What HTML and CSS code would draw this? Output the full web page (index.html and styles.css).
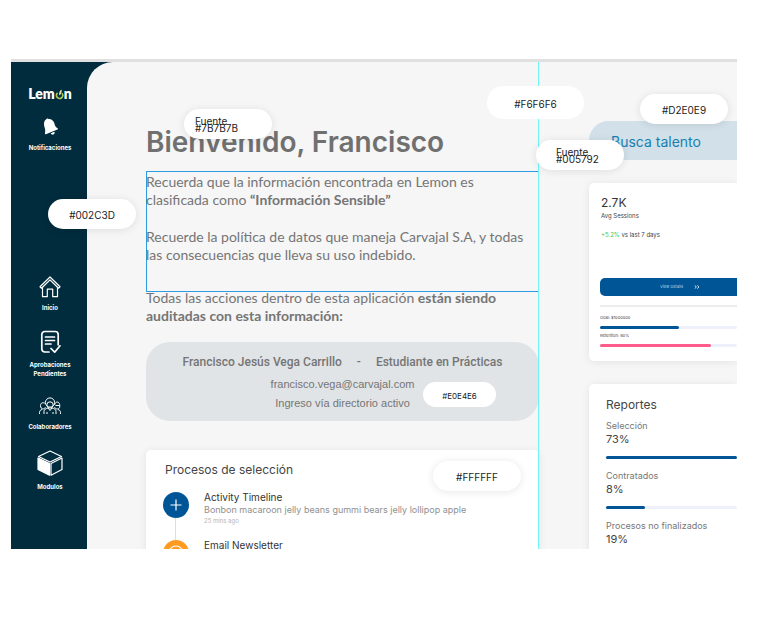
FILE: index.html
```html
<!DOCTYPE html>
<html lang="es">
<head>
<meta charset="utf-8">
<meta name="viewport" content="width=device-width, initial-scale=1">
<title>Lemon</title>
<link rel="stylesheet" href="styles.css">
</head>
<body>
<div class="frame">
  <nav class="sidebar" aria-label="Principal">
    <a class="logo" href="#" aria-label="Lemon">Lem<svg class="logo-o" viewBox="0 0 9 13"><path d="M2.600 4.800A3.200 3.200 0 1 0 7 5.200" fill="none" stroke="#a9c85a" stroke-width="1.700"/><path d="M4.300 7.500C3.700 5 4.600 2.600 6.600 1.500 7 4 6.200 6.300 4.300 7.500z" fill="#dfe9a0"/></svg>n</a>
    <a class="nav-item nav-bell" href="#">
      <svg width="18" height="18" viewBox="-2 0 18 18" fill="#fff"><path d="M3.200 1.200C3.600.3 4.900.1 5.400.9 8.600.700 11 2.800 11.600 5.900c.4 2.100 1.300 3.300 3 4.300.5.4.4 1-.1 1.200L2.900 16.200c-.6.2-1.100-.2-1-.8.5-2 .4-3.700-.2-5.700C.6 6 .7 3 3.200 1.200z"/><path d="M7.800 15.300l3.700-1.500c.4 1.200 0 2.300-1.100 2.800-1.100.4-2.100 0-2.600-1.300z"/></svg>
      <span>Notificaciones</span>
    </a>
    <a class="nav-item" href="#">
      <svg width="22" height="22" viewBox="0 0 22 22" fill="none" stroke="#fff" stroke-width="1.200" stroke-linejoin="round"><path d="M1 10.800L11 1l10 9.800-1.500 1.400L11 3.900l-8.500 8.300z"/><path d="M3.500 11.500v9.200h4.800v-7.500h5.400v7.500h4.800v-9.200"/></svg>
      <span>Inicio</span>
    </a>
    <a class="nav-item nav-approve" href="#">
      <svg width="22" height="24" viewBox="0 0 22 24" fill="none" stroke="#fff" stroke-width="1.700" stroke-linecap="round" stroke-linejoin="round"><path d="M10 22H5.800a3 3 0 0 1-3-3V4.500a3 3 0 0 1 3-3h10.400a3 3 0 0 1 3 3v10.300"/><path d="M6.500 7h9M6.500 10.500h9M6.500 14H12"/><path d="M12 18.500l3.700 3.700 5.300-6.400"/></svg>
      <span>Aprobaciones Pendientes</span>
    </a>
    <a class="nav-item nav-people" href="#">
      <svg width="24" height="18" viewBox="0 0 24 18" fill="none" stroke="#fff" stroke-width="1"><circle cx="12" cy="5.500" r="4.600"/><circle cx="12" cy="8" r="3.200"/><path d="M6 17v-2.500c0-2 1.600-3 4-3.500l2 2.500 2-2.500c2.400.5 4 1.500 4 3.500V17M9 17v-2M15 17v-2"/><path d="M7.500 6.500C5 5 2.500 5.800 2.500 8.500c0 2.200 1.200 3.500 2.500 3.500 1 0 1.900-.7 2.500-1.800M1.500 17v-1.500c0-1.500.9-2.500 2.500-3M16.500 8C17 6 18 5 19.200 5c1.700 0 2.600 1.800 2.600 4s-1 3-2.500 3-2.300-.8-2.800-2M22.500 17v-1.500c0-1.500-.9-2.500-2.500-3M17.500 8.500h4"/></svg>
      <span>Colaboradores</span>
    </a>
    <a class="nav-item nav-modules" href="#">
      <svg width="26" height="26" viewBox="0 0 26 26" stroke="#fff" stroke-width="1.200" stroke-linejoin="round" fill="none"><path d="M13 1L24.500 6.500 13 12 1.500 6.500z"/><path d="M1 8l11.500 5.500v11.700L1 19.500z" fill="#fff"/><path d="M25 8l-11 5.500v11.700l11-5.700z"/></svg>
      <span>Modulos</span>
    </a>
    <div class="tag tag-dark">#002C3D</div>
  </nav>

  <main class="main">
    <section class="content">
      <h1>Bienvenido, Francisco</h1>
      <div class="notice">
        <p>Recuerda que la información encontrada en Lemon es clasificada como <strong>“Información Sensible”</strong></p>
        <p>Recuerde la política de datos que maneja Carvajal S.A, y todas las consecuencias que lleva su uso indebido.</p>
      </div>
      <p class="audit">Todas las acciones dentro de esta aplicación <strong>están siendo auditadas con esta información:</strong></p>
      <div class="identity">
        <div class="identity-name"><span>Francisco Jesús Vega Carrillo</span><span>-</span><span>Estudiante en Prácticas</span></div>
        <div>francisco.vega@carvajal.com</div>
        <div>Ingreso vía directorio activo</div>
        <div class="tag tag-small">#E0E4E6</div>
      </div>
      <section class="card processes">
        <h2>Procesos de selección</h2>
        <ol class="timeline">
          <li>
            <svg class="dot" viewBox="0 0 26 26"><circle cx="13" cy="13" r="13" fill="#005596"/><path d="M13 7.500v11M7.500 13h11" stroke="#fff" stroke-width="1.200"/></svg>
            <div><h3>Activity Timeline</h3><p>Bonbon macaroon jelly beans gummi bears jelly lollipop apple</p><time>25 mins ago</time></div>
          </li>
          <li>
            <svg class="dot" viewBox="0 0 26 26"><circle cx="13" cy="13" r="13" fill="#ff9b21"/><circle cx="13" cy="13" r="7" fill="none" stroke="#fff" stroke-width="1.200"/><path d="M13 9v4.500M13 15.500v1" stroke="#fff" stroke-width="1.200"/></svg>
            <div><h3>Email Newsletter</h3></div>
          </li>
        </ol>
        <div class="tag tag-white">#FFFFFF</div>
      </section>
      <div class="guide"></div>
      <div class="tag tag-font-gray"><span>Fuente</span><span>#7B7B7B</span></div>
      <div class="tag tag-page">#F6F6F6</div>
    </section>

    <aside class="side">
      <input class="search" type="search" placeholder="Busca talento" aria-label="Busca talento">
      <section class="card sessions">
        <h2>2.7K</h2>
        <p class="sessions-label">Avg Sessions</p>
        <p class="delta"><b>+5.2%</b> vs last 7 days</p>
        <button type="button"><span>View Details</span><svg width="6" height="4" viewBox="0 0 6 4" fill="none" stroke="#fff" stroke-width=".8"><path d="M.7.4L2.400 2 .7 3.600M3.300.4L5 2 3.300 3.600"/></svg></button>
        <hr>
        <p class="metric">Goal: $1000000</p>
        <div class="bar"><div class="fill" style="width:58%"></div></div>
        <p class="metric">Retention: 90%</p>
        <div class="bar"><div class="fill pink" style="width:81%"></div></div>
      </section>
      <section class="card reports">
        <h2>Reportes</h2>
        <div class="report"><p>Selección</p><strong>73%</strong><div class="bar"><div class="fill" style="width:100%"></div></div></div>
        <div class="report"><p>Contratados</p><strong>8%</strong><div class="bar"><div class="fill" style="width:30%"></div></div></div>
        <div class="report"><p>Procesos no finalizados</p><strong>19%</strong></div>
      </section>
      <div class="tag tag-search">#D2E0E9</div>
      <div class="tag tag-font-blue"><span>Fuente</span><span>#005792</span></div>
    </aside>
  </main>
</div>
</body>
</html>
```
FILE: styles.css
```css
* { box-sizing: border-box; }
body {
  margin: 0;
  height: 100vh;
  padding: 59px 25px 73px 11px;
  background: #fff;
  color: #757575;
  font-family: Inter, "Liberation Sans", sans-serif;
}
h1, h2, h3, p, ol { margin: 0; padding: 0; }
a { color: inherit; text-decoration: none; }
svg { display: block; }

.frame {
  height: 100%;
  display: flex;
  overflow: hidden;
  background: #002c3d;
  border-top: 3px solid #e0e0e0;
}

/* Sidebar */
.sidebar {
  position: relative;
  z-index: 2;
  flex: 0 0 76px;
  display: flex;
  flex-direction: column;
  align-items: center;
  padding: 24px 0 0 2px;
  color: #fff;
}
.logo {
  display: flex;
  align-items: center;
  height: 16px;
  font: 800 14px/16px Lato, sans-serif;
}
.logo-o { width: 9px; height: 13px; }
.nav-item {
  display: flex;
  flex-direction: column;
  align-items: center;
  gap: 5px;
  width: 52px;
  margin-bottom: 18px;
  text-align: center;
  font-size: 6px;
  line-height: 9px;
  font-weight: 700;
}
.nav-bell { margin: 16px 0 124px; gap: 7px; }
.nav-approve { margin-bottom: 19px; gap: 6px; }
.nav-people { margin-bottom: 19px; gap: 7px; }
.nav-modules { gap: 6px; }

/* Main area */
.main {
  flex: 1;
  min-width: 0;
  display: grid;
  grid-template-columns: minmax(0, 393fr) minmax(0, 148fr);
  gap: 50px;
  padding-left: 59px;
  background: #f6f6f6;
  border-top-left-radius: 26px;
}
.content, .side { position: relative; }
.content { padding-top: 62px; }
h1 { font-size: 28px; line-height: 36px; font-weight: 600; color: #707070; white-space: nowrap; }
.notice {
  height: 121px;
  margin-top: 11px;
  padding-top: 2px;
  box-shadow: inset 0 0 0 1px #2f9be0;
}
.notice p, .audit { font: 14px/18px Lato, sans-serif; }
.notice p + p { margin-top: 19px; }
.audit { margin-top: -3px; }
.identity {
  position: relative;
  margin-top: 17px;
  height: 79px;
  padding-top: 11px;
  border-radius: 24px;
  background: #e0e4e6;
  text-align: center;
  font: 11px/19px "Liberation Sans", sans-serif;
}
.identity-name {
  display: flex;
  justify-content: center;
  gap: 15px;
  margin-bottom: 3px;
  font: 500 12px/19px Roboto, sans-serif;
}
.card { background: #fff; box-shadow: 0 1px 8px rgba(0, 0, 0, .08); color: #444; }
.card h2, .card h3 { font-weight: 400; }
.processes {
  position: relative;
  height: 200px;
  margin-top: 29px;
  padding: 11px 17px 0;
  border-radius: 5px;
}
.processes h2 { padding-left: 2px; font-size: 12px; line-height: 18px; }
.timeline { list-style: none; margin-top: 13px; }
.timeline li { display: flex; gap: 15px; height: 48px; position: relative; }
.timeline li:first-child::before {
  content: "";
  position: absolute;
  left: 12px;
  top: 26px;
  bottom: 0;
  width: 1px;
  background: #ddd;
}
.dot { width: 26px; height: 26px; flex: none; }
.timeline h3 { font-size: 10px; line-height: 12px; margin-top: -1px; color: #333; }
.timeline p { font-size: 9px; line-height: 13px; color: #909090; white-space: nowrap; }
.timeline time { display: block; font-size: 6px; line-height: 10px; color: #b5b5b5; }
.guide { position: absolute; top: 0; bottom: 0; right: 0; width: 1px; background: #6ff5f8; }

/* Right column */
.side { padding-top: 59px; }
.search {
  display: block;
  width: 100%;
  height: 39px;
  padding: 2px 0 0 22px;
  border: 0;
  border-radius: 20px 0 0 20px;
  background: #d2e0e9;
  font: 14px/18px Inter, sans-serif;
}
.search::placeholder { color: #1480b2; opacity: 1; }
.sessions {
  margin-top: 23px;
  height: 178px;
  padding: 12px 0 0 11px;
  border-radius: 5px 0 0 5px;
}
.sessions h2 { font-size: 12px; line-height: 16px; color: #333; padding-left: 1px; }
.sessions-label { font-size: 6px; line-height: 10px; padding-left: 1px; }
.delta { margin-top: 9px; font-size: 6px; line-height: 10px; padding-left: 1px; }
.delta b { color: #35c958; font-weight: 400; }
.sessions button {
  display: flex;
  align-items: center;
  gap: 11px;
  width: 100%;
  height: 18px;
  margin-top: 38px;
  padding: 0 0 0 60px;
  border: 0;
  border-radius: 5px 0 0 5px;
  background: #005596;
  color: #b9d2e6;
  font: 4px/6px Inter, sans-serif;
}
.sessions hr { height: 2px; margin: 9px 0 8px; border: 0; background: #ececec; }
.metric { font-size: 4px; line-height: 6px; margin-bottom: 5px; }
.bar { height: 3px; border-radius: 2px; background: #eef1fb; }
.fill { height: 100%; border-radius: 2px; background: #005596; }
.fill.pink { background: #ff5b8c; }
.sessions .bar + .metric { margin-top: 4px; }
.reports {
  margin-top: 23px;
  height: 240px;
  padding: 13px 0 0 17px;
  border-radius: 5px 0 0 5px;
}
.reports h2 { font-size: 12px; line-height: 16px; }
.report { height: 50px; padding-top: 6px; white-space: nowrap; }
.report p { font-size: 9px; line-height: 13px; color: #777; }
.report strong { display: block; font-size: 11px; line-height: 15px; font-weight: 400; }
.report .bar { margin-top: 9px; }

/* Colour tags floating over the canvas */
.tag {
  position: absolute;
  z-index: 3;
  display: flex;
  align-items: center;
  justify-content: center;
  width: 88px;
  height: 30px;
  padding-top: 2px;
  border-radius: 17px;
  background: #fff;
  box-shadow: 0 1px 8px rgba(0, 0, 0, .1);
  color: #222;
  font: 10px/12px Inter, sans-serif;
}
.tag-dark { left: 37px; top: 137px; }
.tag-font-gray, .tag-font-blue {
  flex-direction: column;
  align-items: flex-start;
  line-height: 7px;
  padding-left: 11px;
}
.tag-font-gray { left: 38px; top: 47px; }
.tag-font-blue { left: -53px; top: 78px; padding-left: 20px; }
.tag-page { right: -45px; top: 24px; width: 97px; height: 33px; box-shadow: none; }
.tag-search { left: 51px; top: 32px; }
.tag-small { right: 43px; top: 40px; width: 73px; height: 25px; font-size: 8px; box-shadow: none; }
.tag-white { right: 18px; top: 11px; }
```
